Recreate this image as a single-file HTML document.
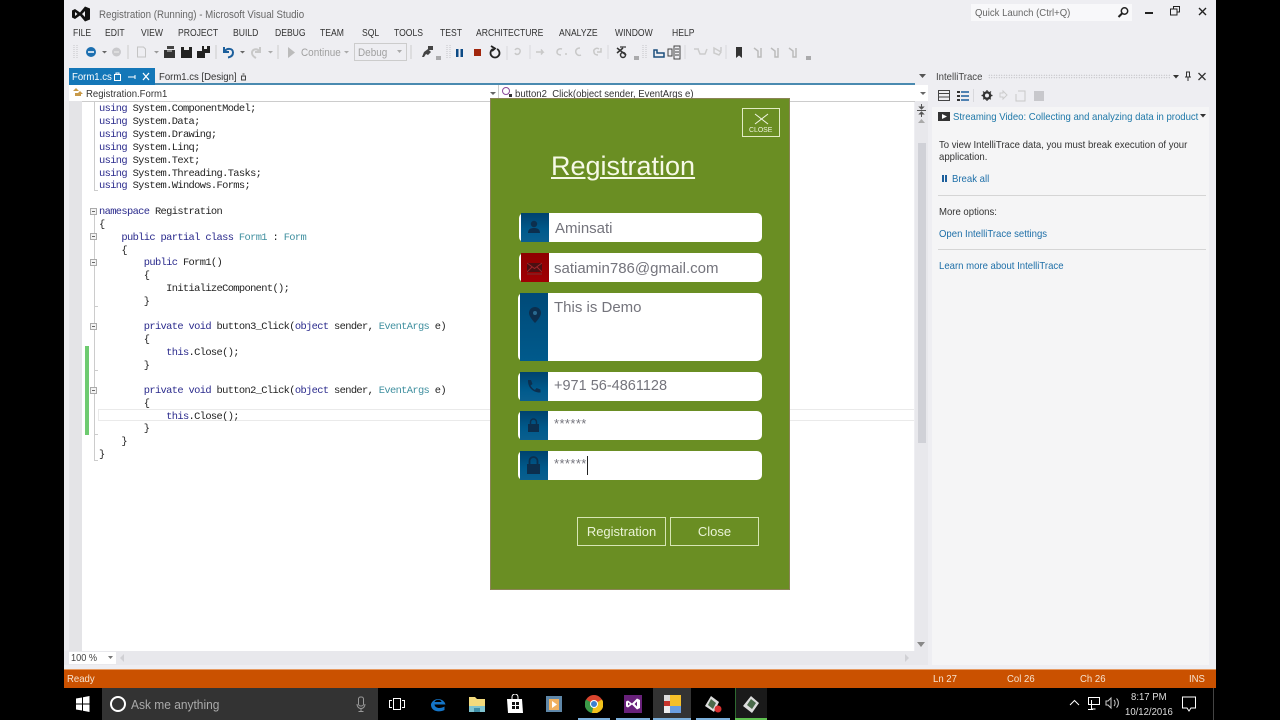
<!DOCTYPE html>
<html><head><meta charset="utf-8"><style>
html,body{margin:0;padding:0;width:1280px;height:720px;overflow:hidden;background:#000}
body{position:relative;font-family:"Liberation Sans",sans-serif}
div,span.a,svg.a{position:absolute}
.t{position:absolute;white-space:nowrap;font-size:10.5px;line-height:13px;color:#333;transform-origin:left top;transform:translateY(1px) scaleX(.92)}
.m{position:absolute;white-space:pre;font-family:"Liberation Mono",monospace;font-size:10.4px;letter-spacing:-.64px;line-height:13px;color:#222;left:99px}
.m b{font-weight:normal;color:#2a2a8c}.m i{font-style:normal;color:#3f8f9f}
.menu{top:26px;font-size:10px;color:#333;transform:translateY(1px) scaleX(.86)}
.l{color:#1e6fa8}
.f{background:#fff;border-radius:5px;height:29px}
.ic{position:absolute;left:2px;top:0;bottom:0;width:28px;background:linear-gradient(#00426e,#005a8c 60%,#0a5f8f)}
.ft{position:absolute;left:35px;top:5px;font-size:15px;line-height:19px;color:#74747c;white-space:nowrap}
.btn{border:1px solid #d7e6b4;color:#eaf3d6;font-size:13px;text-align:center;box-sizing:border-box;height:29px;line-height:27px;top:517px}
.fold{position:absolute;left:90px;width:7px;height:7px;border:1px solid #aaa;box-sizing:border-box;background:#f4f4f4}
.fold:after{content:"";position:absolute;left:1px;top:2px;width:3px;height:1px;background:#666}
</style></head><body>
<div style="left:64px;top:0;width:1152px;height:688px;background:#eeeef2"></div>

<!-- title -->
<svg class="a" style="left:72px;top:6px" width="20" height="16" viewBox="0 0 20 16"><path d="M0 4.500L3 3L8 6.500L13 0.500L18 2.500V13.500L13 15.500L8 9.500L3 13L0 11.500ZM3 6V10L5.500 8ZM13 5L10 8L13 11Z" fill="#111" fill-rule="evenodd"/></svg>
<span class="t" style="left:99px;top:8px;font-size:10.6px;color:#666">Registration (Running) - Microsoft Visual Studio</span>
<div style="left:971px;top:4px;width:161px;height:17px;background:#f8f8fa"></div>
<span class="t" style="left:975px;top:6px;color:#666;font-size:10.4px">Quick Launch (Ctrl+Q)</span>
<svg class="a" style="left:1117px;top:6px" width="13" height="13"><circle cx="7.500" cy="5" r="3.200" fill="none" stroke="#222" stroke-width="1.500"/><path d="M5 7.500L1.500 11" stroke="#222" stroke-width="2"/></svg>
<div style="left:1145px;top:12px;width:8px;height:2px;background:#222"></div>
<svg class="a" style="left:1170px;top:6px" width="11" height="10"><path d="M3.500 2.500V.5H9.500V6H7.500M.5 3H7V9H.5Z" fill="none" stroke="#222"/></svg>
<svg class="a" style="left:1198px;top:7px" width="9" height="9"><path d="M1 1L8 8M8 1L1 8" stroke="#222" stroke-width="1.400"/></svg>

<!-- menu -->
<span class="t menu" style="left:73px">FILE</span><span class="t menu" style="left:105px">EDIT</span><span class="t menu" style="left:141px">VIEW</span><span class="t menu" style="left:178px">PROJECT</span><span class="t menu" style="left:233px">BUILD</span><span class="t menu" style="left:275px">DEBUG</span><span class="t menu" style="left:320px">TEAM</span><span class="t menu" style="left:362px">SQL</span><span class="t menu" style="left:394px">TOOLS</span><span class="t menu" style="left:440px">TEST</span><span class="t menu" style="left:476px">ARCHITECTURE</span><span class="t menu" style="left:559px">ANALYZE</span><span class="t menu" style="left:615px">WINDOW</span><span class="t menu" style="left:672px">HELP</span>

<!-- toolbar: x = screen - 64 -->
<svg class="a" style="left:64px;top:42px" width="760" height="20">
<path d="M10 3v14M13 3v14M383 3v14M386 3v14M579 3v14M582 3v14" stroke="#c4c4c8" stroke-dasharray="1 1"/>
<circle cx="27" cy="10" r="5" fill="#1c6fb0"/><path d="M24 10h6" stroke="#fff" stroke-width="1.500"/>
<path d="M38 9h5l-2.500 2.500z" fill="#666"/>
<circle cx="52.500" cy="10" r="4.500" fill="#c9c9cc"/><path d="M50 10h5" stroke="#eee"/>
<path d="M64 3v14M152 3v14M214 3v14M347 3v14M399 0" stroke="#ccc"/>
<path d="M73.500 5h6l2 2v8h-8z" fill="none" stroke="#c4c4c4"/><path d="M90 9h5l-2.500 2.500z" fill="#999"/>
<path d="M100 8h11v8h-11z" fill="#333"/><path d="M103 4h7v3h-7z" fill="#444"/><path d="M103 9h5" stroke="#ddd"/>
<path d="M117 5h11v11h-11z" fill="#222"/><path d="M120 5h5v3h-5z" fill="#eee"/>
<path d="M133 9h8v7h-8zM138 4h8v7h-8z" fill="#222"/><path d="M140 4h3v3h-3z" fill="#eee"/>
<path d="M160 5v5h5M161 9c2-3 8-3 8 1.500 0 3-2 4.500-5 5" fill="none" stroke="#1c5f9c" stroke-width="2"/>
<path d="M176 9h5l-2.500 2.500z" fill="#666"/>
<path d="M196 5v5h-5M195 9c-2-3-7-2-7 2 0 2 2 4 4 5" fill="none" stroke="#c8c8c8" stroke-width="2"/><path d="M204 9h5l-2.500 2.500z" fill="#aaa"/>
<path d="M224 5l7 5.500-7 5.500z" fill="#bbb"/>
<path d="M280 9h5l-2.500 2.500z" fill="#aaa"/>
<path d="M358 15l2-5 4-3 3 3-3 3-2-1-2 3zM364 4h5v4h-5z" fill="#444"/><path d="M372 15h5M372 17h5" stroke="#666"/>
<rect x="392" y="7" width="2.500" height="8" fill="#0c4a85"/><rect x="396.500" y="7" width="2.500" height="8" fill="#0c4a85"/>
<rect x="410" y="7" width="7" height="7" fill="#a1260d"/>
<path d="M433 7a4.500 4.500 0 1 1-4 0M427 4l4 2.500-3 2.500" fill="none" stroke="#222" stroke-width="1.800"/>
<path d="M443 4v14M466 3v14M544 3v14M621 3v14M662 3v14" stroke="#d8d8dc"/>
<path d="M451 8c2-3 6-1 5 2-1 3-4 3-5 1M472 10h7l-2-2.500M479 10l-2 2.500M498 7c-3-1-5 1-5 3s2 3 4 3M501 12h2M516 6c-3 0-5 2-4 5 1 2 3 3 5 2M535 7c-3-2-6 1-5 3 0 2 2 3 4 3M537 6v4h-4" fill="none" stroke="#c8c8c8" stroke-width="1.500"/>
<path d="M553 6l9 7M553 11l6-5" stroke="#333" stroke-width="1.500"/><circle cx="559" cy="13" r="2.500" fill="none" stroke="#333" stroke-width="1.500"/><path d="M556 5h6" stroke="#333" stroke-width="1.200"/>
<path d="M570 15h5M570 17h5" stroke="#666"/>
<path d="M590 8h3v3h7v4h-10z" fill="none" stroke="#1c4f7c" stroke-width="1.500"/>
<path d="M604 7h4v7h-4zM610 4h6v13h-6zM611 7h4M611 10h4M611 13h4" fill="none" stroke="#444"/>
<path d="M634 7l2 5h5l2-5M630 7h5M650 6l7 4-2 3-5-2zM657 5v4" fill="none" stroke="#ccc" stroke-width="1.500"/>
<path d="M672 5h6v11l-3-2.500-3 2.500z" fill="#333"/>
<path d="M690 6l4 3v6h3V6M707 6l4 3v6h3V6M725 6l4 3v6h3V6" fill="none" stroke="#bbb" stroke-width="1.500"/>
<path d="M742 15h5M742 17h5" stroke="#666"/>
</svg>
<span class="t" style="left:301px;top:46px;color:#a0a0a0;font-size:10.800px">Continue</span>
<div style="left:354px;top:43px;width:53px;height:18px;border:1px solid #ccc;box-sizing:border-box"></div>
<span class="t" style="left:358px;top:46px;color:#a0a0a0;font-size:10.800px">Debug</span>
<svg class="a" style="left:397px;top:50px" width="6" height="4"><path d="M0 0h5L2.500 3z" fill="#aaa"/></svg>

<!-- tab strip -->
<div style="left:69px;top:83px;width:846px;height:2px;background:#4a8ab0"></div>
<div style="left:69px;top:68px;width:86px;height:17px;background:#1477b8"></div>
<span class="t" style="left:72px;top:70px;color:#fff;font-size:10.400px">Form1.cs</span>
<svg class="a" style="left:114px;top:72px" width="40" height="10"><path d="M.5 2.500h6v6h-6zM2 2.500V1h3v1.500" fill="none" stroke="#fff"/><path d="M16 5h5M21 3v4M14 5h2" stroke="#fff"/><path d="M29 1l6 7M35 1l-6 7" stroke="#fff" stroke-width="1.300"/></svg>
<span class="t" style="left:159px;top:70px;font-size:10.400px">Form1.cs [Design]</span>
<svg class="a" style="left:241px;top:73px" width="6" height="8"><path d="M.5 3h4v4h-4zM1.500 1h2" fill="none" stroke="#444"/></svg>
<svg class="a" style="left:919px;top:73px" width="8" height="6"><path d="M0 1h7L3.500 5z" fill="#555"/></svg>

<!-- nav bar -->
<div style="left:69px;top:85px;width:846px;height:16px;background:#fff;border-bottom:1px solid #ccc"></div>
<div style="left:915px;top:85px;width:13px;height:16px;background:#fff;border-bottom:1px solid #ccc"></div>
<svg class="a" style="left:72px;top:87px" width="12" height="11"><path d="M1 4l3-3 3 3zM5 7l3-3 3 3zM3 6h6v3H3z" fill="#c89a4a"/></svg>
<span class="t" style="left:86px;top:87px;font-size:10.400px">Registration.Form1</span>
<span class="t" style="left:515px;top:87px;font-size:10.400px">button2_Click(object sender, EventArgs e)</span>
<svg class="a" style="left:501px;top:86px" width="13" height="13"><circle cx="5" cy="5" r="3.500" fill="none" stroke="#8a4a9a"/><rect x="8" y="8" width="3" height="3" fill="#333"/></svg>
<div style="left:498px;top:85px;width:1px;height:15px;background:#ccc"></div>
<svg class="a" style="left:490px;top:92px" width="8" height="5"><path d="M0 0h6L3 3z" fill="#666"/></svg>
<svg class="a" style="left:920px;top:92px" width="8" height="5"><path d="M0 0h6L3 3z" fill="#666"/></svg>

<!-- editor -->
<div style="left:64px;top:101px;width:18px;height:550px;background:#ececef"></div>
<div style="left:69px;top:101px;width:13px;height:550px;background:#e4e4e7"></div>
<div style="left:82px;top:102px;width:832px;height:549px;background:#fff"></div>
<div style="left:85px;top:346px;width:4px;height:89px;background:#6ecb70"></div>
<div style="left:98px;top:409px;width:816px;height:12px;border:1px solid #eaeaea;box-sizing:border-box;border-right:0"></div>
<div style="left:94px;top:102px;width:1px;height:88px;background:#ccc"></div>
<div style="left:94px;top:215px;width:1px;height:246px;background:#ccc"></div>
<div class="fold" style="top:208px"></div><div class="fold" style="top:233px"></div><div class="fold" style="top:259px"></div><div class="fold" style="top:323px"></div><div class="fold" style="top:387px"></div>
<div style="left:94px;top:190px;width:4px;height:1px;background:#ccc"></div>
<div style="left:94px;top:306px;width:4px;height:1px;background:#ccc"></div>
<div style="left:94px;top:370px;width:4px;height:1px;background:#ccc"></div>
<div style="left:94px;top:434px;width:4px;height:1px;background:#ccc"></div>
<div style="left:94px;top:460px;width:4px;height:1px;background:#ccc"></div>
<span class="m" style="top:103px"><b>using</b> System.ComponentModel;</span>
<span class="m" style="top:116px"><b>using</b> System.Data;</span>
<span class="m" style="top:129px"><b>using</b> System.Drawing;</span>
<span class="m" style="top:142px"><b>using</b> System.Linq;</span>
<span class="m" style="top:155px"><b>using</b> System.Text;</span>
<span class="m" style="top:168px"><b>using</b> System.Threading.Tasks;</span>
<span class="m" style="top:180px"><b>using</b> System.Windows.Forms;</span>
<span class="m" style="top:206px"><b>namespace</b> Registration</span>
<span class="m" style="top:219px">{</span>
<span class="m" style="top:232px">    <b>public partial class</b> <i>Form1</i> : <i>Form</i></span>
<span class="m" style="top:245px">    {</span>
<span class="m" style="top:257px">        <b>public</b> Form1()</span>
<span class="m" style="top:270px">        {</span>
<span class="m" style="top:283px">            InitializeComponent();</span>
<span class="m" style="top:296px">        }</span>
<span class="m" style="top:321px">        <b>private void</b> button3_Click(<b>object</b> sender, <i>EventArgs</i> e)</span>
<span class="m" style="top:334px">        {</span>
<span class="m" style="top:347px">            <b>this</b>.Close();</span>
<span class="m" style="top:360px">        }</span>
<span class="m" style="top:385px">        <b>private void</b> button2_Click(<b>object</b> sender, <i>EventArgs</i> e)</span>
<span class="m" style="top:398px">        {</span>
<span class="m" style="top:411px">            <b>this</b>.Close();</span>
<span class="m" style="top:423px">        }</span>
<span class="m" style="top:436px">    }</span>
<span class="m" style="top:449px">}</span>

<!-- vscroll -->
<div style="left:915px;top:101px;width:13px;height:550px;background:#e8e8ec"></div>
<div style="left:918px;top:143px;width:8px;height:300px;background:#d0d1d7"></div>
<svg class="a" style="left:915px;top:104px" width="13" height="34"><path d="M2 6.500h9M6.500 0v4M6.500 9v4M4.500 3h4l-2 2zM4.500 10h4l-2-2z" stroke="#555" fill="#555"/><path d="M3 19h7l-3.500-4z" fill="#aaa"/></svg>
<svg class="a" style="left:917px;top:642px" width="9" height="6"><path d="M0 0h8L4 5z" fill="#888"/></svg>
<!-- hscroll -->
<div style="left:64px;top:651px;width:864px;height:14px;background:#e8e8ec"></div>
<div style="left:69px;top:652px;width:47px;height:12px;background:#fff"></div>
<span class="t" style="left:71px;top:651px;font-size:10px;color:#444">100 %</span>
<svg class="a" style="left:108px;top:656px" width="6" height="4"><path d="M0 0h5L2.500 3z" fill="#777"/></svg>
<svg class="a" style="left:120px;top:654px" width="5" height="9"><path d="M4 0v8L0 4z" fill="#d0d0d4"/></svg>
<svg class="a" style="left:905px;top:654px" width="5" height="9"><path d="M0 0v8L4 4z" fill="#d0d0d4"/></svg>

<!-- right panel -->
<span class="t" style="left:936px;top:70px;font-size:10.400px;color:#444">IntelliTrace</span>
<div style="left:988px;top:74px;width:182px;height:5px;background-image:radial-gradient(#c4c4c8 .6px,transparent .7px);background-size:2.500px 2.500px"></div>
<svg class="a" style="left:1173px;top:70px" width="36" height="13"><path d="M0 5h6L3 8.500z" fill="#333"/><path d="M13.500 2h3v5h-3zM12 7h6M15 7v4" stroke="#333" fill="none"/><path d="M25.500 3l7 7M32.500 3l-7 7" stroke="#333" stroke-width="1.300"/></svg>
<div style="left:932px;top:85px;width:277px;height:22px;background:#eeeef2"></div>
<svg class="a" style="left:938px;top:88px" width="110" height="15">
<path d="M.5 2.500h11v10H.5zM.5 5.500h11M.5 9h11" fill="none" stroke="#444"/>
<path d="M19 3h3v2h-3zM19 7h3v2h-3zM19 11h3v2h-3z" fill="#333"/><path d="M23 4h8M23 8h8M23 12h8" stroke="#1c5f9c" stroke-width="1.500"/><path d="M35.500 1v13" stroke="#d8d8dc"/>
<circle cx="49" cy="7.500" r="3.200" fill="none" stroke="#333" stroke-width="2.400"/><path d="M49 2v11M43.500 7.500h11M45 3.500l8 8M53 3.500l-8 8" stroke="#333" stroke-width="1.200" stroke-dasharray="2 7"/>
<path d="M62 5h3V3l4 4-4 4V9h-3z" fill="none" stroke="#ccc"/>
<path d="M80 3h7v10h-9V6" fill="none" stroke="#c8c8c8"/>
<rect x="96" y="3" width="10" height="10" fill="#c8c8cc"/>
</svg>
<div style="left:932px;top:107px;width:277px;height:558px;background:#f5f5f6"></div>
<svg class="a" style="left:938px;top:112px" width="13" height="10"><rect width="12" height="9" fill="#333"/><path d="M4 2l5 2.500L4 7z" fill="#fff"/></svg>
<span class="t" style="left:953px;top:110px;color:#1e78a8;font-size:10.400px">Streaming Video: Collecting and analyzing data in product</span>
<svg class="a" style="left:1200px;top:114px" width="7" height="5"><path d="M0 0h6L3 3.500z" fill="#333"/></svg>
<span class="t" style="left:939px;top:138px;font-size:10.400px">To view IntelliTrace data, you must break execution of your</span>
<span class="t" style="left:939px;top:150px;font-size:10.400px">application.</span>
<div style="left:942px;top:175px;width:2px;height:7px;background:#1c5f9c"></div><div style="left:945px;top:175px;width:2px;height:7px;background:#1c5f9c"></div>
<span class="t l" style="left:952px;top:172px;font-size:10.400px">Break all</span>
<div style="left:938px;top:195px;width:268px;height:1px;background:#d5d5d5"></div>
<span class="t" style="left:939px;top:205px;font-size:10.400px">More options:</span>
<span class="t l" style="left:939px;top:227px;font-size:10.400px">Open IntelliTrace settings</span>
<div style="left:938px;top:249px;width:268px;height:1px;background:#d5d5d5"></div>
<span class="t l" style="left:939px;top:259px;font-size:10.400px">Learn more about IntelliTrace</span>

<!-- form -->
<div style="left:490px;top:98px;width:300px;height:492px;background:#6a8e23;border:1px solid #8a8455;box-sizing:border-box"></div>
<div style="left:742px;top:108px;width:38px;height:29px;border:1px solid #e2ecc4;box-sizing:border-box"></div>
<svg class="a" style="left:754px;top:113px" width="15" height="12"><path d="M1 1L14 11M14 1L1 11" stroke="#f2f6e4" stroke-width="1"/></svg>
<span class="t" style="left:749px;top:125px;font-size:7.500px;line-height:7px;color:#eef3dc">CLOSE</span>
<span class="t" style="left:551px;top:151px;font-size:27px;line-height:31px;color:#f6f9e6;transform:none;text-decoration:underline;text-decoration-thickness:1.500px;text-underline-offset:2px">Registration</span>

<div class="f" style="left:519px;top:213px;width:243px"><div class="ic"></div><span class="ft" style="top:6px;left:36px">Aminsati</span>
<svg class="a" style="left:7px;top:7px" width="16" height="15"><circle cx="8" cy="4" r="3.200" fill="#0c2f4e"/><path d="M2 13c0-4 3-5 6-5s6 1 6 5z" fill="#0c2f4e"/></svg></div>
<div class="f" style="left:519px;top:253px;width:243px"><div class="ic" style="background:linear-gradient(#8e0000,#a00004)"></div><span class="ft" style="top:6px">satiamin786@gmail.com</span>
<svg class="a" style="left:8px;top:9px" width="15" height="13"><rect y="1" width="15" height="9" fill="#4a1012"/><path d="M0 1l7.500 5.500L15 1M0 10l5-5M15 10l-5-5" fill="none" stroke="#a0252a"/><path d="M0 12h15" stroke="#7a3030"/></svg></div>
<div class="f" style="left:518px;top:293px;width:244px;height:68px"><div class="ic" style="background:linear-gradient(#004a78,#005a8c)"></div><span class="ft" style="left:36px;top:5px">This is Demo</span>
<svg class="a" style="left:10px;top:14px" width="14" height="17"><path d="M7 0a6 6 0 0 1 6 6c0 4-6 10-6 10S1 10 1 6a6 6 0 0 1 6-6z" fill="#0c2f4e"/><circle cx="7" cy="6" r="2" fill="#2a6a90"/></svg></div>
<div class="f" style="left:518px;top:372px;width:244px"><div class="ic"></div><span class="ft" style="left:36px;top:5px;font-size:14.500px">+971 56-4861128</span>
<svg class="a" style="left:8px;top:7px" width="16" height="15"><path d="M2 1l3 0 1.500 4-2 1.500c1 2 2.500 3.500 4.500 4.500l1.500-2 4 1.500v3c-7 .5-13-5-12.500-12.500z" fill="#0c2f4e"/></svg></div>
<div class="f" style="left:518px;top:411px;width:244px"><div class="ic"></div><span class="ft" style="left:36px;top:3px;font-size:13px;letter-spacing:.4px">******</span>
<svg class="a" style="left:9px;top:6px" width="13" height="16"><path d="M3.500 7V5a3 3 0 0 1 6 0v2" fill="none" stroke="#0c2f4e" stroke-width="1.500"/><rect x="1" y="7" width="11" height="8" fill="#0c2f4e"/></svg></div>
<div class="f" style="left:518px;top:451px;width:244px"><div class="ic"></div><span class="ft" style="left:36px;top:3px;font-size:13px;letter-spacing:.4px">******</span>
<div style="left:69px;top:5px;width:1px;height:19px;background:#222"></div>
<svg class="a" style="left:8px;top:4px" width="15" height="20"><path d="M3.500 9V6a4 4 0 0 1 8 0v3" fill="none" stroke="#0c2f4e" stroke-width="1.800"/><rect x="1" y="9" width="13" height="10" fill="#0c2f4e"/></svg></div>

<div class="btn" style="left:577px;width:89px">Registration</div>
<div class="btn" style="left:670px;width:89px">Close</div>

<!-- status -->
<div style="left:64px;top:669px;width:1152px;height:19px;background:#ca5100;border-top:1px solid #e89a60;box-sizing:border-box"></div>
<span class="t" style="left:67px;top:672px;color:#f7e3cf;font-size:10.400px">Ready</span>
<span class="t" style="left:933px;top:672px;color:#f7e3cf;font-size:10.400px">Ln 27</span>
<span class="t" style="left:1007px;top:672px;color:#f7e3cf;font-size:10.400px">Col 26</span>
<span class="t" style="left:1080px;top:672px;color:#f7e3cf;font-size:10.400px">Ch 26</span>
<span class="t" style="left:1189px;top:672px;color:#f7e3cf;font-size:10.400px">INS</span>

<!-- taskbar -->
<svg class="a" style="left:76px;top:696px" width="14" height="16"><path d="M0 2.500L6 1.500V7.500H0zM7 1.300L13.500 0V7.500H7zM0 8.500H6V14.500L0 13.500zM7 8.500H13.500V16L7 14.700z" fill="#fff"/></svg>
<div style="left:102px;top:688px;width:276px;height:32px;background:#333"></div>
<div style="left:110px;top:696px;width:16px;height:16px;border:2px solid #fff;border-radius:50%;box-sizing:border-box"></div>
<span class="t" style="left:131px;top:696px;color:#aaa;font-size:13px;line-height:15px">Ask me anything</span>
<svg class="a" style="left:356px;top:696px" width="10" height="17"><rect x="2.500" y="1" width="5" height="9" rx="2" fill="none" stroke="#999"/><path d="M1 8c0 6 8 6 8 0M5 12v3M2.500 15.500h5" fill="none" stroke="#999"/></svg>
<svg class="a" style="left:389px;top:697px" width="16" height="14"><path d="M4.500 1.500h7v11h-7zM3 3.500H.5v7H3M13 3.500h2.500v7H13" fill="none" stroke="#fff"/></svg>
<svg class="a" style="left:429px;top:695px" width="18" height="18"><path d="M2 9a7.500 7 0 0 1 14.500 0.500H5.500c.5 4 6 4.500 10 2v3.500c-6 3-14 1-13.500-6z M5.500 7h7c-.5-3-6-3-7 0z" fill="#1475c8" fill-rule="evenodd"/></svg>
<svg class="a" style="left:468px;top:696px" width="18" height="17"><path d="M1 1h6l2 2h8v13H1z" fill="#f3da7c"/><rect x="1" y="10" width="16" height="6" fill="#7fc4d0"/><rect x="6" y="12" width="6" height="4" fill="#3f8fa8"/></svg>
<svg class="a" style="left:507px;top:694px" width="17" height="20"><path d="M0 5h15l1 14H1z" fill="#fff"/><path d="M5 6V3a3 3 0 0 1 6 0v3" fill="none" stroke="#fff"/><path d="M5 8h3v3H5zM9 8h3v3H9zM5 12h3v3H5zM9 12h3v3H9z" fill="#111"/></svg>
<svg class="a" style="left:546px;top:696px" width="17" height="17"><rect width="16" height="16" fill="#5f87a8"/><rect x="3" y="3" width="10" height="11" fill="#f0b060"/><path d="M6 5l5 3.500-5 3.500z" fill="#fff"/></svg>
<svg class="a" style="left:585px;top:695px" width="18" height="18"><circle cx="9" cy="9" r="9" fill="#d9442e"/><path d="M9 9L1 4.500A9 9 0 0 0 7 18z" fill="#3a9a48"/><path d="M9 9L17 4.500A9 9 0 0 1 7 18z" fill="#f2c21c"/><circle cx="9" cy="9" r="4" fill="#fff"/><circle cx="9" cy="9" r="3" fill="#3d80d0"/></svg>
<svg class="a" style="left:624px;top:695px" width="18" height="18"><rect width="18" height="18" fill="#68217a"/><path d="M2 6.500L4 5.500L8 8.500L13 3.500L16 5V13L13 14.500L8 9.500L4 12.500L2 11.500ZM4 7.500V10.500L6 9ZM13 6.500L10.500 9L13 11.500Z" fill="#fff" fill-rule="evenodd"/></svg>
<div style="left:653px;top:688px;width:38px;height:32px;background:#333"></div>
<svg class="a" style="left:664px;top:695px" width="17" height="18"><rect x="6" width="11" height="11" fill="#f5c02a"/><rect x="6" y="11" width="11" height="7" fill="#6a9ee0"/><rect width="6" height="6" fill="#ddd"/><rect y="6" width="6" height="5" fill="#c8352c"/><rect y="11" width="6" height="7" fill="#eee"/></svg>
<svg class="a" style="left:702px;top:695px" width="20" height="19"><path d="M9 1l8 6-5 10-9-6z" fill="#ddd"/><path d="M9 4l5 4-3 6-5-4z" fill="#4a6a4a"/><circle cx="16" cy="14" r="3.500" fill="#d83030"/></svg>
<div style="left:735px;top:688px;width:32px;height:32px;background:#1a1a1a;border-left:1px solid #2e6a30;box-sizing:border-box"></div>
<svg class="a" style="left:741px;top:695px" width="20" height="19"><path d="M10 1l8 7-7 10-9-7z" fill="#ddd"/><path d="M10 4l5 4-4 6-5-4z" fill="#4a6a4a"/></svg>
<div style="left:653px;top:718px;width:38px;height:2px;background:#7cb0dc"></div>
<div style="left:696px;top:718px;width:34px;height:2px;background:#7cb0dc"></div>
<div style="left:735px;top:718px;width:32px;height:2px;background:#5fc050"></div>
<div style="left:616px;top:718px;width:34px;height:2px;background:#7cb0dc"></div>
<div style="left:578px;top:718px;width:32px;height:2px;background:#7cb0dc"></div>
<svg class="a" style="left:1069px;top:699px" width="11" height="8"><path d="M1 6l4.500-4.500L10 6" fill="none" stroke="#fff"/></svg>
<svg class="a" style="left:1086px;top:696px" width="15" height="16"><path d="M2.500 1.500h11v7h-11zM5.500 4v9h4M2 13.500h5" fill="none" stroke="#fff"/></svg>
<svg class="a" style="left:1105px;top:696px" width="15" height="14"><path d="M1 5h2l3-3v10L3 9H1z" fill="none" stroke="#ccc"/><path d="M9 4c1.500 1.500 1.500 4.500 0 6M11.500 2.500c2.500 2.500 2.500 6.500 0 9" fill="none" stroke="#ccc"/></svg>
<span class="t" style="left:1131px;top:690px;color:#ddd;font-size:10.400px">8:17 PM</span>
<span class="t" style="left:1125px;top:705px;color:#ddd;font-size:10.400px">10/12/2016</span>
<svg class="a" style="left:1182px;top:696px" width="15" height="17"><path d="M.5 1h13v11H9l-2 3-2-3H.5z" fill="none" stroke="#fff"/></svg>
<div style="left:1213px;top:688px;width:1px;height:32px;background:#444"></div>
</body></html>
